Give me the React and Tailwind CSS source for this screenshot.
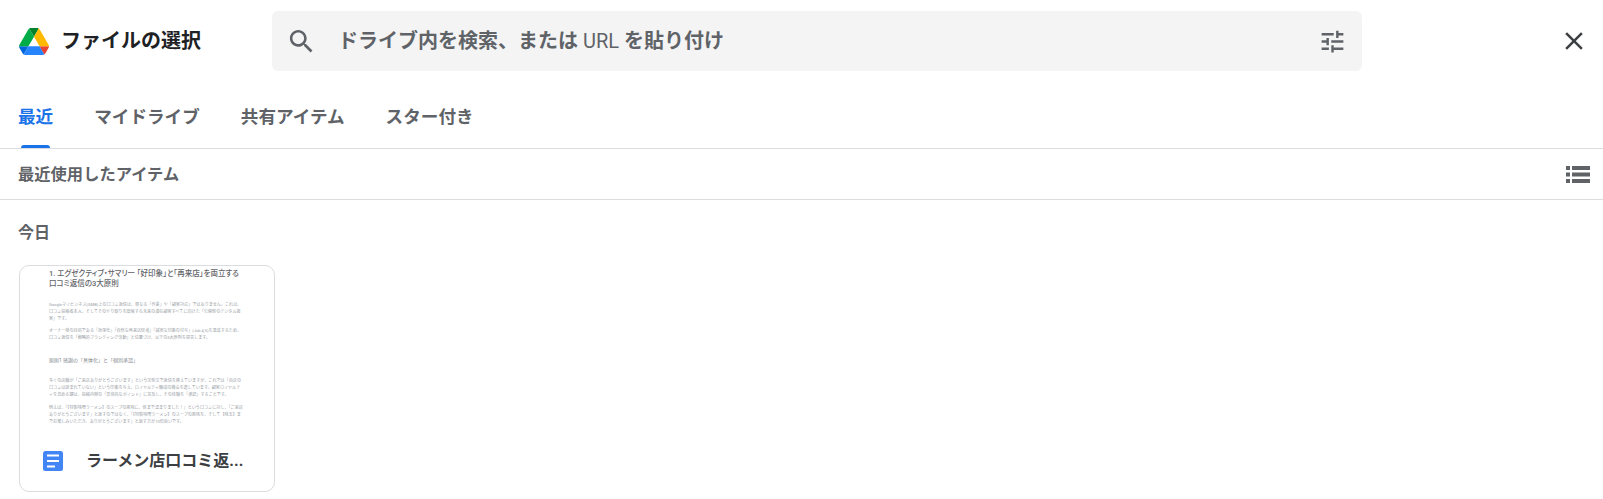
import React from 'react';

const tabs = ['最近', 'マイドライブ', '共有アイテム', 'スター付き'];

const DriveLogo = () => (
  <svg viewBox="0 0 87.3 78" className="w-[30px] h-[27px]">
    <path d="m6.6 66.85 3.85 6.65c.8 1.4 1.95 2.5 3.3 3.3l13.75-23.8h-27.5c0 1.55.4 3.1 1.2 4.5z" fill="#0066da" />
    <path d="m43.65 25-13.75-23.8c-1.35.8-2.5 1.9-3.3 3.3l-25.4 44a9.06 9.06 0 0 0 -1.2 4.5h27.5z" fill="#00ac47" />
    <path d="m73.55 76.8c1.35-.8 2.5-1.9 3.3-3.3l1.6-2.75 7.65-13.25c.8-1.4 1.2-2.95 1.2-4.5h-27.502l5.852 11.5z" fill="#ea4335" />
    <path d="m43.65 25 13.75-23.8c-1.35-.8-2.9-1.2-4.5-1.2h-18.5c-1.6 0-3.15.45-4.5 1.2z" fill="#00832d" />
    <path d="m59.8 53h-32.3l-13.75 23.8c1.35.8 2.9 1.2 4.5 1.2h50.8c1.6 0 3.15-.45 4.5-1.2z" fill="#2684fc" />
    <path d="m73.4 26.5-12.7-22c-.8-1.4-1.95-2.5-3.3-3.3l-13.75 23.8 16.15 28h27.45c0-1.55-.4-3.1-1.2-4.5z" fill="#ffba00" />
  </svg>
);

const SearchIcon = () => (
  <svg viewBox="0 0 24 24" className="w-[31px] h-[31px] shrink-0" fill="#5f6368">
    <path d="M15.5 14h-.79l-.28-.27C15.41 12.59 16 11.11 16 9.5 16 5.91 13.09 3 9.5 3S3 5.91 3 9.5 5.91 16 9.5 16c1.61 0 3.09-.59 4.23-1.57l.27.28v.79l5 4.99L20.49 19l-4.99-5zm-6 0C7.01 14 5 11.99 5 9.5S7.01 5 9.5 5 14 7.01 14 9.5 11.99 14 9.5 14z" />
  </svg>
);

const TuneIcon = () => (
  <svg viewBox="0 0 24 24" className="w-[29px] h-[29px] shrink-0" fill="#5f6368">
    <path d="M3 17v2h6v-2H3zM3 5v2h10V5H3zm10 16v-2h8v-2h-8v-2h-2v6h2zM7 9v2H3v2h4v2h2V9H7zm14 4v-2H11v2h10zm-6-4h2V7h4V5h-4V3h-2v6z" />
  </svg>
);

const CloseIcon = () => (
  <svg viewBox="0 0 24 24" className="w-[30px] h-[30px]" fill="#3c4043">
    <path d="M19 6.41L17.59 5 12 10.59 6.41 5 5 6.41 10.59 12 5 17.59 6.41 19 12 13.41 17.59 19 19 17.59 13.41 12z" />
  </svg>
);

const ListIcon = () => (
  <svg viewBox="0 0 24 17" className="w-[24px] h-[17px]" fill="#5f6368">
    <path d="M0 0h4v4H0zM0 6.5h4v4H0zM0 13h4v4H0zM6 0h18v4H6zM6 6.5h18v4H6zM6 13h18v4H6z" />
  </svg>
);

const DocIcon = () => (
  <svg viewBox="0 0 20 20" className="w-[20px] h-[20px] shrink-0">
    <rect width="20" height="20" rx="2.5" fill="#4285f4" />
    <path d="M4 3.5h12v2H4zM4 9h12v2H4zM4 14.5h8v2H4z" fill="#fff" />
  </svg>
);

export default function App() {
  return (
    <div className="w-[1603px] h-[499px] overflow-hidden bg-white font-['Roboto','Noto_Sans_CJK_JP',sans-serif]">
      <header className="flex items-center h-[82px] pl-[19px] pr-[14px]">
        <div className="flex items-center w-[253px] shrink-0">
          <DriveLogo />
          <h1 className="ml-[12px] text-[20px] font-bold text-[#202124] leading-none">ファイルの選択</h1>
        </div>
        <div className="flex items-center w-[1090px] h-[60px] rounded-[6px] bg-[#f4f4f4] pl-[14px] pr-[15px]">
          <SearchIcon />
          <span className="ml-[21px] text-[20px] font-bold text-[#5f6368] flex-1">
            ドライブ内を検索、または <span className="font-normal">URL</span> を貼り付け
          </span>
          <TuneIcon />
        </div>
        <div className="flex-1 flex justify-end">
          <CloseIcon />
        </div>
      </header>

      <nav className="flex gap-[41px] h-[67px] pl-[18px] border-b border-[#dadce0]">
        {tabs.map((tab, i) => (
          <div key={tab} className="relative flex items-center pt-[4px]">
            <span className={`text-[17.6px] font-bold ${i === 0 ? 'text-[#1a73e8]' : 'text-[#5f6368]'}`}>{tab}</span>
            {i === 0 && <div className="absolute left-[3px] right-[3px] bottom-0 h-[3px] rounded-t-[3px] bg-[#1a73e8]" />}
          </div>
        ))}
      </nav>

      <div className="flex items-center justify-between h-[51px] pl-[18px] pr-[13px] border-b border-[#dadce0]">
        <span className="text-[16.3px] font-bold text-[#5f6368] pt-[2px]">最近使用したアイテム</span>
        <ListIcon />
      </div>

      <section className="pl-[19px]">
        <h2 className="-ml-[1px] h-[65px] pt-[21px] text-[16px] leading-[24px] font-bold text-[#5f6368]">今日</h2>
        <div className="w-[256px] h-[227px] rounded-[10px] border border-[#dadce0] overflow-hidden flex flex-col">
          <div className="h-[172px] shrink-0 overflow-hidden pl-[29px] pr-[30px] pt-[3px] text-[#9aa0a6] text-[4.1px] leading-[7px]">
            <p className="text-[7.5px] leading-[10px] text-[#5f6368] font-medium [font-feature-settings:'palt'] whitespace-nowrap">
              1. エグゼクティブ・サマリー 「好印象」と「再来店」を両立する
              <br />
              口コミ返信の3大原則
            </p>
            <p className="mt-[12px]">Googleマイビジネス(GMB)上の口コミ返信は、単なる「作業」や「顧客対応」ではありません。これは、口コミ投稿者本人、そしてそのやり取りを閲覧する未来の潜在顧客すべてに向けた「公開型のデジタル接客」です。</p>
            <p className="mt-[4.5px]">オーナー様の目的である「効率化」「自然な再来店促進」「誠実な印象の付与」(Job 4,5)を達成するため、口コミ返信を「戦略的ブランディング活動」と位置づけ、以下の3大原則を提言します。</p>
            <p className="mt-[15.5px] text-[5px] leading-[8px] text-[#80868b]">原則1 感謝の「具体化」と「個別承認」</p>
            <p className="mt-[12.5px]">多くの店舗が「ご来店ありがとうございます」という定型文で返信を終えていますが、これでは「自店の口コミは読まれていない」という印象を与え、ロイヤルティ醸成の機会を逸しています。顧客ロイヤルティを高める鍵は、投稿内容の「具体的なポイント」に言及し、その体験を「承認」することです。</p>
            <p className="mt-[6px]">例えば、「【特製味噌ラーメン】のスープの風味に、体まで温まりました！」という口コミに対し、「ご来店ありがとうございます」と返すのではなく、「【特製味噌ラーメン】のスープの風味を、そして【味玉】までお楽しみいただき、ありがとうございます」と返す方が10倍良いです。</p>
          </div>
          <div className="flex items-center pl-[23px] pt-[11px]">
            <DocIcon />
            <span className="ml-[23px] whitespace-nowrap text-[16px] font-bold text-[#3c4043]">ラーメン店口コミ返...</span>
          </div>
        </div>
      </section>
    </div>
  );
}
